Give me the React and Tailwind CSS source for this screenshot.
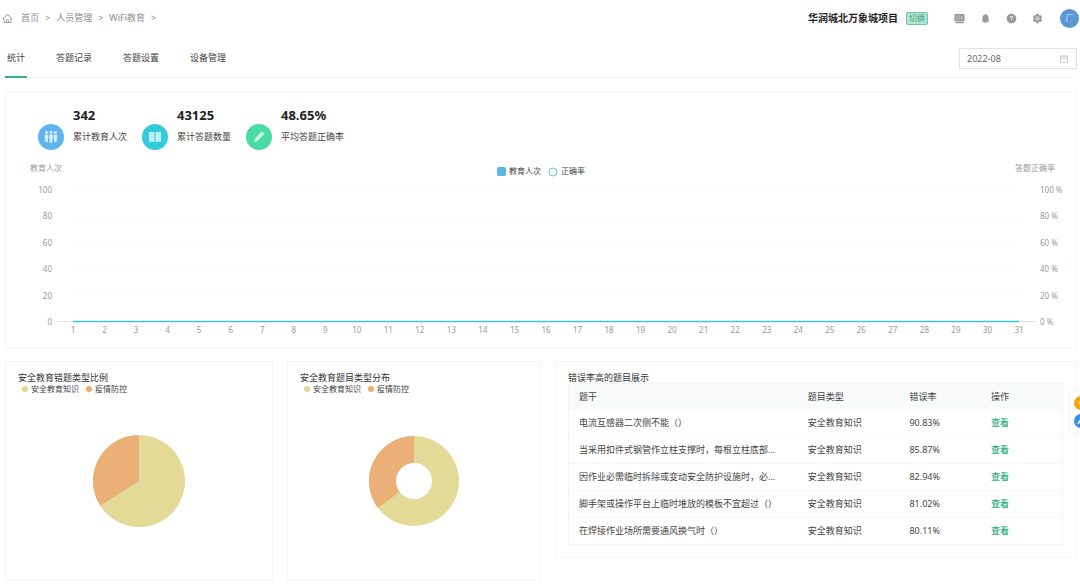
import React from "react";
import {
  AiOutlineHome,
  AiFillBell,
  AiFillQuestionCircle,
  AiFillSetting,
  AiOutlineCalendar,
} from "react-icons/ai";

const crumbs = ["首页", "人员管理", "WiFi教育"];
const tabs = ["统计", "答题记录", "答题设置", "设备管理"];

const tools = [
  { label: "大屏", Icon: ScreenIcon },
  { label: "消息", Icon: AiFillBell },
  { label: "帮助", Icon: AiFillQuestionCircle },
  { label: "设置", Icon: AiFillSetting },
];

const stats = [
  { value: "342", label: "累计教育人次", Icon: PeopleIcon, color: "bg-[#60b4ee]" },
  { value: "43125", label: "累计答题数量", Icon: BookIcon, color: "bg-[#33cbda]" },
  { value: "48.65%", label: "平均答题正确率", Icon: PencilIcon, color: "bg-[#48dba4]" },
];

const rows = [
  { title: "电流互感器二次侧不能（）", rate: "90.83%" },
  { title: "当采用扣件式钢管作立柱支撑时，每根立柱底部...", rate: "85.87%" },
  { title: "因作业必需临时拆除或变动安全防护设施时，必...", rate: "82.94%" },
  { title: "脚手架或操作平台上临时堆放的模板不宜超过（）", rate: "81.02%" },
  { title: "在焊接作业场所需要通风换气时（）", rate: "80.11%" },
];

function ScreenIcon({ className }) {
  return (
    <svg viewBox="0 0 12 12" className={className} fill="currentColor" aria-hidden="true">
      <rect x="0.5" y="1" width="11" height="8.4" rx="0.8" />
      <rect x="1.5" y="9.9" width="9" height="1.3" rx="0.5" />
      <path d="M2 3.4h2.8M2 5.2h2.8M2 7h2.8M6.3 2.6v5.2M7.3 5.2h2.9M8.8 3v4.4" stroke="#e4e4e4" strokeWidth="0.6" fill="none" />
    </svg>
  );
}

function PeopleIcon() {
  return (
    <svg viewBox="0 0 16 16" className="size-4" fill="#d9eefc" aria-hidden="true">
      <circle cx="3.6" cy="3.6" r="1.5" />
      <circle cx="8" cy="3" r="1.6" />
      <circle cx="12.4" cy="3.6" r="1.5" />
      <path d="M1.8 5.8h3.4v4H4.9v3.2H2.3V9.8h-.5z" />
      <path d="M6.2 5.2h3.6v4.6h-.4v4H6.6v-4h-.4z" />
      <path d="M10.8 5.8h3.4v4h-.5v3.2h-2.6V9.8h-.3z" />
    </svg>
  );
}

function BookIcon() {
  return (
    <svg viewBox="0 0 16 16" className="size-4" fill="#bdf0f4" aria-hidden="true">
      <path d="M2 3h4.6q.9 0 .9.6v9.6q-.3-.5-1.1-.5H2zM14 3H9.4q-.9 0-.9.6v9.6q.3-.5 1.1-.5H14z" />
    </svg>
  );
}

function PencilIcon() {
  return (
    <svg viewBox="0 0 16 16" className="size-4" fill="#d5f8e9" aria-hidden="true">
      <path d="M10 3.2q1.2-1 2.4.1t.1 2.5L6.5 12.1 3 13.2 4 9.5z" />
    </svg>
  );
}

function TrendChart() {
  const levels = [0, 20, 40, 60, 80, 100];
  const days = Array.from({ length: 31 }, (_, i) => i + 1);
  const y = (v) => 171 - v * 1.32;
  const x = (d) => 67 + ((d - 1) * 946) / 30;
  return (
    <svg viewBox="0 -1 1070 198" className="block w-full text-[8px]" role="img" aria-label="教育人次与正确率">
      <g fill="#999">
        <text x="24" y="20">教育人次</text>
        <text x="1049" y="20" textAnchor="end">答题正确率</text>
      </g>
      <rect x="491" y="16" width="9" height="9" rx="2" fill="#5cb3ea" />
      <circle cx="547" cy="21" r="4" fill="#fff" stroke="#6cc3e6" strokeWidth="1" />
      <g fill="#444">
        <text x="503" y="23">教育人次</text>
        <text x="555" y="23">正确率</text>
      </g>
      {levels.map((v) => (
        <g key={v} fill="#999">
          {v > 0 && <line x1="67" x2="1013" y1={y(v)} y2={y(v)} stroke="#fbfbfb" />}
          <text x="46" y={y(v) + 3} textAnchor="end">{v}</text>
          <text x="1034" y={y(v) + 3}>{v} %</text>
        </g>
      ))}
      <line x1="51" x2="1029" y1="170.5" y2="170.5" stroke="#dcdfe2" />
      <line x1="67" x2="1013" y1="170.5" y2="170.5" stroke="#40c4d4" strokeWidth="1.6" />
      <g fill="#999" textAnchor="middle">
        {days.map((d) => (
          <text key={d} x={x(d)} y="182">{d}</text>
        ))}
      </g>
    </svg>
  );
}

function Pie({ share, inner, radius, label }) {
  const a = share * 2 * Math.PI;
  const ex = 46 + radius * Math.sin(a);
  const ey = 46 - radius * Math.cos(a);
  return (
    <svg viewBox="0 0 92 92" className="mx-auto mt-[41px] mb-[52px] block size-[92px]" role="img" aria-label={label}>
      <circle cx="46" cy="46" r={radius} fill="#e3da97" />
      <path d={`M46 46L${ex} ${ey}A${radius} ${radius} 0 0 1 46 ${46 - radius}Z`} fill="#ebb077" />
      {inner > 0 && <circle cx="46" cy="46" r={inner} fill="#fff" />}
    </svg>
  );
}

function PieCard({ title, ...pie }) {
  return (
    <section className="border border-[#f1f5f5] px-3 pt-[11px]">
      <h2 className="leading-[10px] whitespace-nowrap text-[#333]">{title}</h2>
      <ul className="ml-1 flex gap-[7px] text-[8px] leading-[11px] whitespace-nowrap text-[#444]">
        <li className="flex items-center gap-[3px]">
          <span className="size-[6px] rounded-full bg-[#e0d98f]" />
          安全教育知识
        </li>
        <li className="flex items-center gap-[3px]">
          <span className="size-[6px] rounded-full bg-[#ebac6c]" />
          疫情防控
        </li>
      </ul>
      <Pie label={title} {...pie} />
    </section>
  );
}

export default function App() {
  return (
    <div
      lang="zh-CN"
      className="min-h-screen overflow-x-hidden bg-white font-['Noto_Sans','Noto_Sans_CJK_SC',sans-serif] text-[9px] text-[#444]"
    >
      <header className="flex h-9 items-center justify-between pr-px pl-[2px]">
        <nav aria-label="breadcrumb" className="flex items-center gap-[6px] text-[#8c8c8c]">
          <AiOutlineHome className="mr-[2px] size-[11px]" />
          {crumbs.map((c) => (
            <React.Fragment key={c}>
              <a href="#">{c}</a>
              <span>&gt;</span>
            </React.Fragment>
          ))}
        </nav>
        <div className="flex items-center">
          <strong className="text-[10px] text-[#222]">华润城北万象城项目</strong>
          <button className="ml-2 flex h-[13px] items-center rounded-[2px] border border-[#6cc5a4] bg-[#b5e3d3] px-[2px] text-[8px] leading-none text-[#3ba47c]">
            切换
          </button>
          <div className="ml-[26px] flex gap-[15px] text-[#999]">
            {tools.map(({ label, Icon }) => (
              <button key={label} aria-label={label}>
                <Icon className="size-[11px]" />
              </button>
            ))}
          </div>
          <button className="ml-[17px] size-[19px] rounded-full bg-[#5b97d2] text-[8px] leading-none text-[#d7e6f5]" aria-label="用户">
            厂
          </button>
        </div>
      </header>

      <main className="pr-[3px] pl-[5px]">
        <div className="flex items-end justify-between border-b border-[#f0f2f2]">
          <nav className="flex gap-[27px]">
            {tabs.map((t, i) => (
              <a
                key={t}
                href="#"
                aria-current={i === 0 ? "page" : undefined}
                className={
                  i === 0
                    ? "-mb-px border-b-2 border-[#35ad82] px-[2px] pt-[3px] leading-[37px]"
                    : "-mb-px border-b-2 border-transparent px-[2px] pt-[3px] leading-[37px]"
                }
              >
                {t}
              </a>
            ))}
          </nav>
          <label className="mb-2 flex h-[21px] w-[118px] items-center border border-[#e2e4e4] px-[7px]">
            <input aria-label="月份" defaultValue="2022-08" className="w-full min-w-0 text-[#666] outline-none" />
            <AiOutlineCalendar className="size-[10px] shrink-0 text-[#bbb]" />
          </label>
        </div>

        <section className="mt-[13px] border border-[#f1f5f5]">
          <div className="flex gap-[13px] pt-[14px] pl-8">
            {stats.map(({ value, label, Icon, color }) => (
              <div key={label} className="flex min-w-[91px] gap-[9px]">
                <span className={`mt-[18px] flex size-[26px] items-center justify-center rounded-full ${color}`}>
                  <Icon />
                </span>
                <div className="whitespace-nowrap">
                  <p className="text-[13px] leading-[18px] font-bold text-[#222]">{value}</p>
                  <p className="mt-[5px] leading-4">{label}</p>
                </div>
              </div>
            ))}
          </div>
          <TrendChart />
        </section>

        <div className="mt-3 grid grid-cols-[268fr_254fr_522fr] items-start gap-[14px]">
          <PieCard title="安全教育错题类型比例" share={0.66} radius={46} inner={0} />
          <PieCard title="安全教育题目类型分布" share={0.648} radius={45} inner={18} />
          <section className="border border-[#f1f5f5] pt-[11px] pr-[13px] pb-3 pl-3">
            <h2 className="leading-[10px] text-[#333]">错误率高的题目展示</h2>
            <table className="w-full table-fixed border border-[#f1f4f4] text-left whitespace-nowrap">
              <colgroup>
                <col className="w-[46.4%]" />
                <col className="w-[20.6%]" />
                <col className="w-[16.5%]" />
                <col className="w-[16.5%]" />
              </colgroup>
              <thead className="bg-[#f8fbfa]">
                <tr className="h-[26px]">
                  {["题干", "题目类型", "错误率", "操作"].map((h) => (
                    <th key={h} scope="col" className="pl-[10px] font-normal">
                      {h}
                    </th>
                  ))}
                </tr>
              </thead>
              <tbody>
                {rows.map((r) => (
                  <tr key={r.title} className="h-[27px] border-t border-[#f6f8f8]">
                    <td className="pl-[10px]">{r.title}</td>
                    <td className="pl-[10px]">安全教育知识</td>
                    <td className="pl-[10px]">{r.rate}</td>
                    <td className="pl-[10px]">
                      <a href="#" className="font-medium text-[#2fae84]">查看</a>
                    </td>
                  </tr>
                ))}
              </tbody>
            </table>
          </section>
        </div>
      </main>

      <aside className="fixed top-[391px] right-0 flex w-[10px] flex-col gap-[4px] overflow-hidden rounded-l-[3px] bg-white py-[5px] pl-[4px] shadow-[0_0_4px_rgba(0,0,0,0.08)]">
        <button aria-label="提示" className="flex size-[14px] items-center justify-center rounded-full bg-[#f7a60f]">
          <span className="size-[4px] rounded-full border border-white" />
        </button>
        <button aria-label="客服" className="size-[14px] rounded-full bg-[#3b8be8]">
          <svg viewBox="0 0 14 14" className="block size-[14px]" aria-hidden="true">
            <path d="M4 10l3-5 2 3" stroke="#fff" strokeWidth="1.5" fill="none" />
          </svg>
        </button>
      </aside>
    </div>
  );
}
